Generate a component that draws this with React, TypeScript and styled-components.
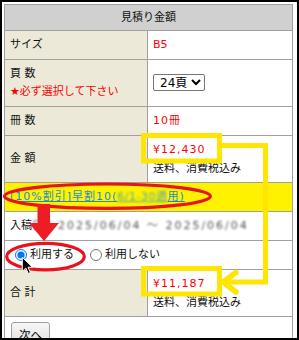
import styled, { createGlobalStyle } from "styled-components";

const GlobalStyle = createGlobalStyle`
  html, body {
    margin: 0;
    padding: 0;
    background: #fff;
  }
  body {
    font-family: "DejaVu Sans", "Noto Sans CJK JP", sans-serif;
    font-size: 11px;
    color: #111;
  }
`;

const Frame = styled.div`
  position: relative;
  width: 299px;
  height: 340px;
  box-sizing: border-box;
  border: 2px solid #000;
  padding: 2px;
  overflow: hidden;
`;

const Table = styled.table`
  width: 289px;
  border-collapse: collapse;
  table-layout: fixed;
  border: 1px solid #a0a0a0;
`;

const LabelCol = styled.col`
  width: 143px;
`;

const Head = styled.th`
  border: 1px solid #a0a0a0;
  background: #d0d0d0;
  padding: 4px 5px 3px;
  line-height: 18px;
  font-weight: normal;
  text-align: center;
`;

const Cell = styled.td<{ $tone?: "label" | "mark" }>`
  border: 1px solid #a0a0a0;
  padding: 5px;
  line-height: 18px;
  vertical-align: middle;
  background: ${({ $tone }) =>
    $tone === "label" ? "#ece9d8" : $tone === "mark" ? "#fff200" : "#fff"};
`;

const Red = styled.span<{ $num?: boolean }>`
  color: #ff0000;
  letter-spacing: ${({ $num }) => ($num ? "1px" : "0")};
`;

const Line = styled.div<{ $drop?: number }>`
  position: relative;
  top: ${({ $drop }) => $drop ?? 0}px;
`;

const Select = styled.select`
  font-family: inherit;
  font-size: 12px;
  height: 17px;
  width: 52px;
  padding: 0 0 0 2px;
  border: 1px solid #767676;
  border-radius: 2px;
  background: #fff;
  color: #000;
`;

const Campaign = styled.a`
  color: #1a8fd0;
  text-decoration: underline;
  letter-spacing: 1px;
`;

const Masked = styled.span<{ $spacing?: number }>`
  filter: blur(1px);
  opacity: 0.75;
  letter-spacing: ${({ $spacing }) => $spacing ?? 0}px;
`;

const Choices = styled.div`
  display: flex;
  align-items: center;
`;

const Choice = styled.label`
  display: inline-flex;
  align-items: center;
  margin-right: 11px;

  input {
    margin: 0 3px 0 5px;
    width: 12px;
    height: 12px;
  }
`;

const NextButton = styled.button`
  font-family: inherit;
  font-size: 11.5px;
  line-height: 18px;
  margin-left: 1px;
  padding: 3px 7px;
  border: 1px solid #a0a0a0;
  border-radius: 3px;
  background: linear-gradient(#f7f7f7, #dddddd);
  color: #000;
`;

const Notes = styled.svg`
  position: absolute;
  left: -2px;
  top: -2px;
  pointer-events: none;
`;

function Annotations() {
  return (
    <Notes width={299} height={340} viewBox="0 0 299 340">
      {/* yellow boxes and connector */}
      <g fill="none" stroke="#ffe600" strokeWidth={5}>
        <rect x={143.5} y={135.5} width={76} height={25.5} />
        <rect x={143.5} y={268.5} width={76} height={25.5} />
        <polyline points="221,145.5 265.5,145.5 265.5,282 226,282" />
        <polyline
          points="236,272.5 223,282 236,292"
          strokeLinecap="round"
          strokeLinejoin="round"
          strokeWidth={5.5}
        />
      </g>
      {/* red marks */}
      <g fill="none" stroke="#e8141c" strokeWidth={3.2}>
        <ellipse cx={107.4} cy={196.2} rx={103} ry={12.2} />
        <ellipse cx={45.5} cy={256.6} rx={38.8} ry={13.3} />
      </g>
      <polygon
        points="37.5,204 50,204 50,223 59,223 44,241 29,223 37.5,223"
        fill="#ee1c25"
      />
      {/* mouse pointer */}
      <path
        d="M0,0 L0,16 L4,12.2 L6.8,18.4 L9.2,17.3 L6.5,11.3 L11.5,11.3 Z"
        transform="translate(22.3 257.3) scale(0.88)"
        fill="#000"
        stroke="#fff"
        strokeWidth={1.1}
        strokeLinejoin="round"
      />
    </Notes>
  );
}

export default function App() {
  return (
    <>
      <GlobalStyle />
      <Frame>
        <Table>
          <colgroup>
            <LabelCol />
            <col />
          </colgroup>
          <thead>
            <tr>
              <Head colSpan={2}>見積り金額</Head>
            </tr>
          </thead>
          <tbody>
            <tr>
              <Cell $tone="label">サイズ</Cell>
              <Cell>
                <Red>B5</Red>
              </Cell>
            </tr>
            <tr>
              <Cell $tone="label">
                <Line>頁 数</Line>
                <Line>
                  <Red>★必ず選択して下さい</Red>
                </Line>
              </Cell>
              <Cell>
                <Select defaultValue="24">
                  <option value="24">24頁</option>
                  <option value="28">28頁</option>
                  <option value="32">32頁</option>
                </Select>
              </Cell>
            </tr>
            <tr>
              <Cell $tone="label">冊 数</Cell>
              <Cell>
                <Red $num>10冊</Red>
              </Cell>
            </tr>
            <tr>
              <Cell $tone="label">金 額</Cell>
              <Cell>
                <Line>
                  <Red $num>¥12,430</Red>
                </Line>
                <Line $drop={1}>送料、消費税込み</Line>
              </Cell>
            </tr>
            <tr>
              <Cell $tone="mark" colSpan={2}>
                <Campaign href="#">
                  [10%割引]早割10(<Masked $spacing={0.5}>6/1-30適</Masked>用)
                </Campaign>
              </Cell>
            </tr>
            <tr>
              <Cell colSpan={2}>
                入稿<Masked $spacing={2}>日：2025/06/04 ～ 2025/06/04</Masked>
              </Cell>
            </tr>
            <tr>
              <Cell colSpan={2}>
                <Choices>
                  <Choice>
                    <input type="radio" name="early" defaultChecked />
                    利用する
                  </Choice>
                  <Choice>
                    <input type="radio" name="early" />
                    利用しない
                  </Choice>
                </Choices>
              </Cell>
            </tr>
            <tr>
              <Cell $tone="label">合 計</Cell>
              <Cell>
                <Line>
                  <Red $num>¥11,187</Red>
                </Line>
                <Line $drop={1}>送料、消費税込み</Line>
              </Cell>
            </tr>
            <tr>
              <Cell colSpan={2}>
                <NextButton type="button">次へ</NextButton>
              </Cell>
            </tr>
          </tbody>
        </Table>
        <Annotations />
      </Frame>
    </>
  );
}
